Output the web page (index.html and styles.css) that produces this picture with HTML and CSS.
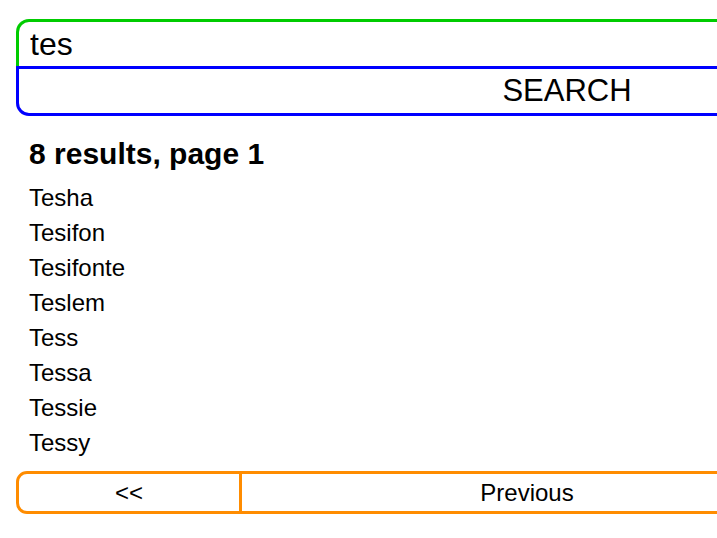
FILE: index.html
```html
<!DOCTYPE html>
<html lang="en">
<head>
<meta charset="utf-8">
<title>Name search</title>
<link rel="stylesheet" href="styles.css">
</head>
<body>
<div class="app">
  <form class="search">
    <input class="search-input" type="text" value="tes">
    <button class="search-button" type="button">SEARCH</button>
  </form>
  <h2 class="summary">8 results, page 1</h2>
  <ul class="results">
    <li>Tesha</li>
    <li>Tesifon</li>
    <li>Tesifonte</li>
    <li>Teslem</li>
    <li>Tess</li>
    <li>Tessa</li>
    <li>Tessie</li>
    <li>Tessy</li>
  </ul>
  <nav class="pager">
    <span class="pager-cell pager-first">&lt;&lt;</span>
    <span class="pager-cell pager-prev">Previous</span>
    <span class="pager-cell pager-next">Next</span>
    <span class="pager-cell pager-last">&gt;&gt;</span>
  </nav>
</div>
</body>
</html>
```

FILE: styles.css
```css
html, body {
  margin: 0;
  padding: 0;
  background: #ffffff;
}

body {
  font-family: "Liberation Sans", Arial, sans-serif;
  font-size: 24px;
  color: #000000;
}

.app {
  width: 1102px;
  margin-left: 16px;
  padding-top: 19px;
}

.search {
  display: flex;
  flex-direction: column;
  margin: 0;
}

.search-input {
  box-sizing: border-box;
  display: block;
  width: 100%;
  height: 47px;
  margin: 0;
  padding: 0 11px;
  border: 3px solid #00cc00;
  border-bottom: none;
  border-radius: 13px 13px 0 0;
  font-family: "Liberation Sans", Arial, sans-serif;
  font-size: 32px;
  color: #000000;
  background: #ffffff;
  outline: none;
}

.search-button {
  box-sizing: border-box;
  display: block;
  width: 100%;
  height: 50px;
  margin: 0;
  padding: 0;
  border: 3px solid #0000ff;
  border-radius: 0 0 13px 13px;
  background: #ffffff;
  font-family: "Liberation Sans", Arial, sans-serif;
  font-size: 31px;
  color: #000000;
  text-align: center;
}

.summary {
  margin: 20px 0 0 0;
  padding-left: 13px;
  font-size: 30px;
  font-weight: bold;
  line-height: 35px;
}

.results {
  list-style: none;
  margin: 9px 0 0 0;
  padding: 0 0 0 13px;
  line-height: 35px;
}

.pager {
  display: flex;
  width: max-content;
  margin-top: 11px;
  border: 3px solid #ff8c00;
  border-radius: 11px;
}

.pager-cell {
  box-sizing: border-box;
  flex: none;
  padding: 5px 0;
  line-height: 27px;
  text-align: center;
  border-left: 3px solid #ff8c00;
}

.pager-first {
  width: 220px;
  border-left: none;
}

.pager-prev {
  width: 573px;
}

.pager-next {
  width: 573px;
}

.pager-last {
  width: 223px;
}
```
